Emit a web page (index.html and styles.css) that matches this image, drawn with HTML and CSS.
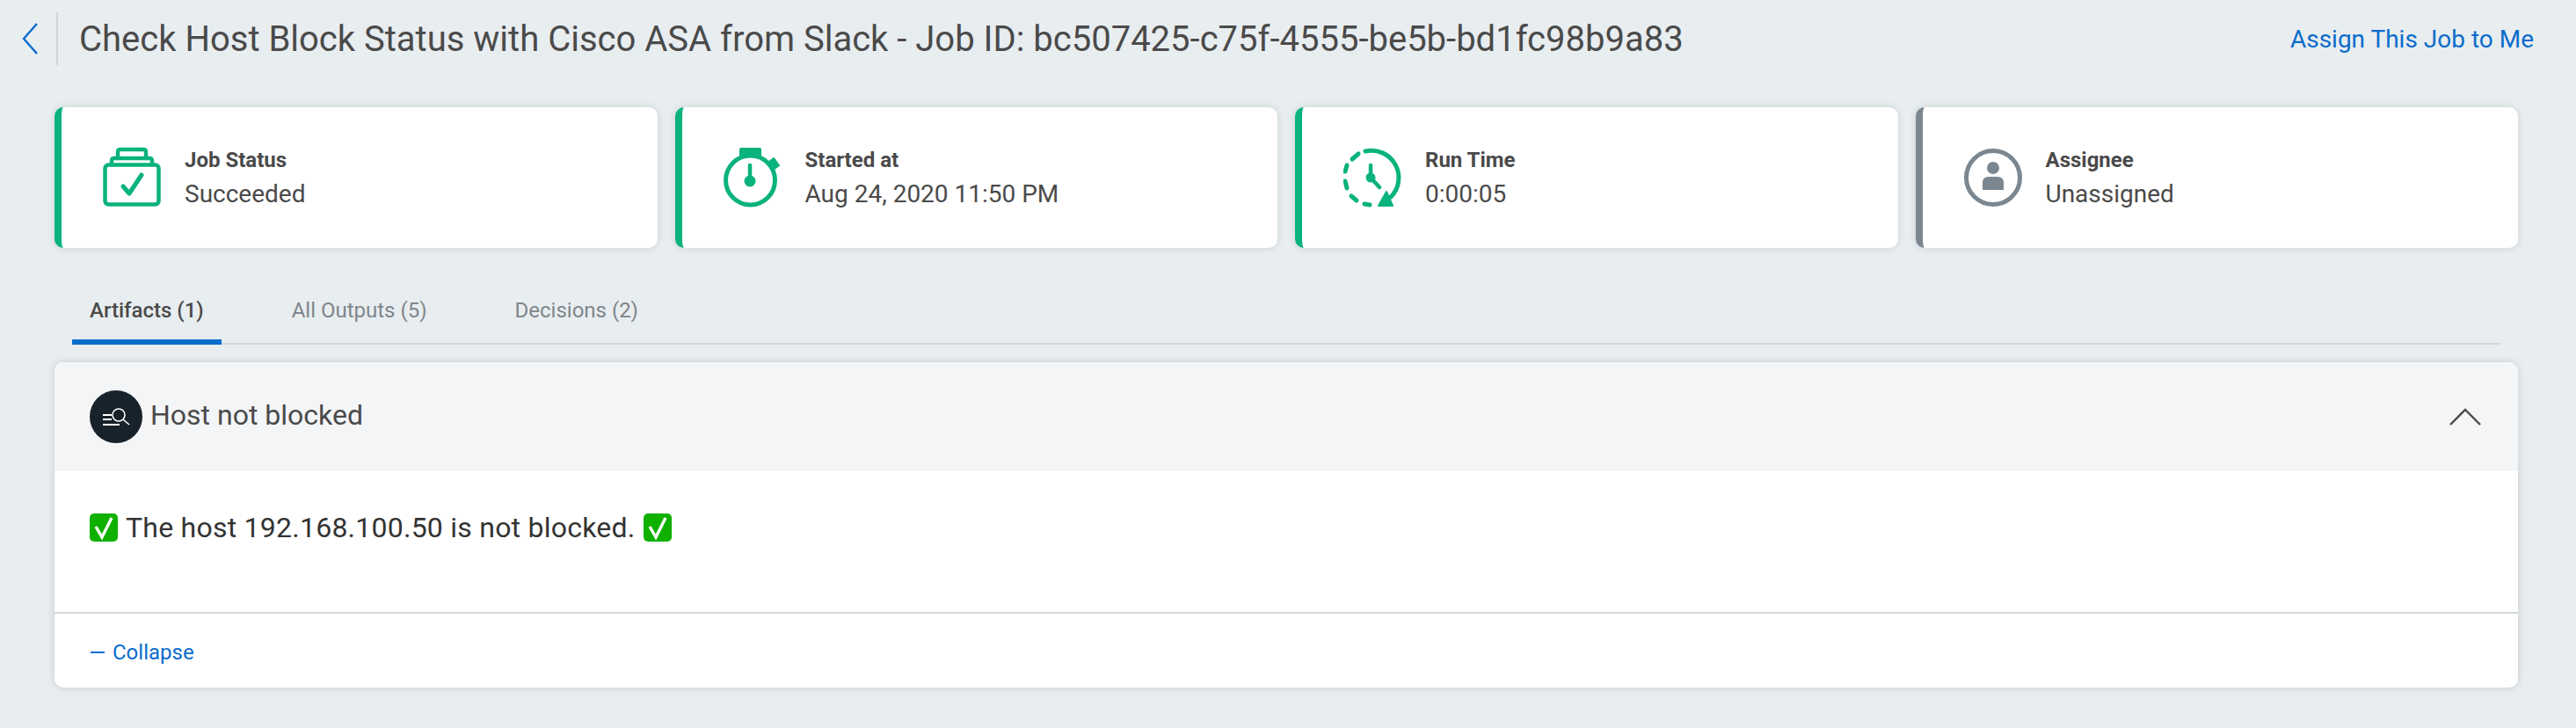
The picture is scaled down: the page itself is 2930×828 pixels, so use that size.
FILE: index.html
```html
<!DOCTYPE html>
<html lang="en">
<head>
    <meta charset="UTF-8">
    <title>Job Details</title>
    <link rel="stylesheet" href="styles.css">
</head>
<body>
    <header class="top-bar">
        <a class="back-link" href="#">
            <svg width="20" height="36" viewBox="0 0 20 36"><path d="M18 1 L3 18 L18 35" fill="none" stroke="#0a6ccb" stroke-width="2.4"/></svg>
        </a>
        <h1 class="job-title">Check Host Block Status with Cisco ASA from Slack - Job ID: bc507425-c75f-4555-be5b-bd1fc98b9a83</h1>
        <a class="assign-link" href="#">Assign This Job to Me</a>
    </header>

    <section class="summary">
        <div class="card">
            <svg class="card-icon" width="70" height="70" viewBox="0 0 70 70">
                <g fill="none" stroke="#0ab27d" stroke-width="4.5" stroke-linejoin="round" stroke-linecap="round">
                    <rect x="2.5" y="20.5" width="61" height="45" rx="4"/>
                    <path d="M10 20 V16 Q10 13 13 13 H53 Q56 13 56 16 V20"/>
                    <path d="M17 13 V6 Q17 3 20 3 H46 Q49 3 49 6 V13"/>
                </g>
                <path d="M23 45 L30 53 L44 32" fill="none" stroke="#0ab27d" stroke-width="5" stroke-linecap="round" stroke-linejoin="round"/>
            </svg>
            <div>
                <div class="card-label">Job Status</div>
                <div class="card-value">Succeeded</div>
            </div>
        </div>
        <div class="card">
            <svg class="card-icon" width="70" height="70" viewBox="0 0 70 70">
                <circle cx="30.5" cy="38" r="28" fill="none" stroke="#0ab27d" stroke-width="5"/>
                <rect x="18" y="1" width="25" height="11" rx="2" fill="#0ab27d"/>
                <rect x="51" y="14" width="11" height="12" rx="1" fill="#0ab27d" transform="rotate(-35 56 20)"/>
                <circle cx="30" cy="39" r="6.5" fill="#0ab27d"/>
                <path d="M30 21 V39" stroke="#0ab27d" stroke-width="4.5" stroke-linecap="round"/>
            </svg>
            <div>
                <div class="card-label">Started at</div>
                <div class="card-value">Aug 24, 2020 11:50 PM</div>
            </div>
        </div>
        <div class="card">
            <svg class="card-icon" width="70" height="70" viewBox="0 0 70 70">
                <g fill="none" stroke="#0ab27d" stroke-width="5" stroke-linecap="round">
                    <path d="M25 5 A31 31 0 0 1 54 57"/>
                    <path d="M10 14 L17 8"/>
                    <path d="M2 28 L4 21"/>
                    <path d="M2 39 L4 47"/>
                    <path d="M9 56 L15 61"/>
                    <path d="M24 65 L30 66"/>
                </g>
                <path d="M40 67 L49 51 L56 67 Z" fill="#0ab27d" stroke="#0ab27d" stroke-width="2" stroke-linejoin="round"/>
                <path d="M31 21 V35 L41 46" fill="none" stroke="#0ab27d" stroke-width="4.5" stroke-linecap="round"/>
                <circle cx="31" cy="35" r="5.5" fill="#0ab27d"/>
            </svg>
            <div>
                <div class="card-label">Run Time</div>
                <div class="card-value">0:00:05</div>
            </div>
        </div>
        <div class="card card-idle">
            <svg class="card-icon" width="70" height="70" viewBox="0 0 70 70">
                <circle cx="33" cy="35" r="30.5" fill="none" stroke="#7b8790" stroke-width="5"/>
                <circle cx="33" cy="24" r="7" fill="#7b8790"/>
                <path d="M21 49 V41 Q21 34 28 34 H38 Q45 34 45 41 V49 Z" fill="#7b8790"/>
            </svg>
            <div>
                <div class="card-label">Assignee</div>
                <div class="card-value">Unassigned</div>
            </div>
        </div>
    </section>

    <nav class="tabs">
        <a class="tab active" href="#">Artifacts (1)</a>
        <a class="tab" href="#">All Outputs (5)</a>
        <a class="tab" href="#">Decisions (2)</a>
    </nav>

    <section class="panel">
        <div class="panel-head">
            <span class="round-icon">
                <svg width="40" height="32" viewBox="0 0 40 32">
                    <circle cx="23" cy="14" r="7" fill="none" stroke="#fff" stroke-width="1.6"/>
                    <path d="M28 19 L35 25" stroke="#fff" stroke-width="1.6"/>
                    <path d="M5 14 H15 M5 19 H15 M5 25 H24" stroke="#fff" stroke-width="1.8"/>
                </svg>
            </span>
            <h2 class="panel-title">Host not blocked</h2>
            <svg class="panel-toggle" width="36" height="20" viewBox="0 0 36 20"><path d="M1 19 L18 2 L35 19" fill="none" stroke="#4a4a4a" stroke-width="2.4"/></svg>
        </div>
        <div class="panel-body">
            <svg class="check" width="32" height="32" viewBox="0 0 32 32">
                <rect width="32" height="32" rx="5" fill="#0fb000"/>
                <path d="M7 15 L14 27 L25 5" fill="none" stroke="#fff" stroke-width="3.4"/>
            </svg>
            <span>The host 192.168.100.50 is not blocked.</span>
            <svg class="check" width="32" height="32" viewBox="0 0 32 32">
                <rect width="32" height="32" rx="5" fill="#0fb000"/>
                <path d="M7 15 L14 27 L25 5" fill="none" stroke="#fff" stroke-width="3.4"/>
            </svg>
        </div>
        <div class="panel-foot">
            <a class="collapse-link" href="#"><span class="dash"></span>Collapse</a>
        </div>
    </section>
</body>
</html>
```

FILE: styles.css
```css
body {
    font-family: Roboto, Arial, sans-serif;
    background-color: #e8edf0;
    color: #4a4a4a;
    margin: 0;
    height: 828px;
    overflow: hidden;
}
a {
    text-decoration: none;
}
.top-bar {
    display: flex;
    align-items: center;
    height: 88px;
    padding: 0 48px 0 24px;
}
.back-link {
    display: flex;
    align-items: center;
    height: 60px;
    padding-right: 20px;
    margin-right: 24px;
    border-right: 2px solid #cfd4d8;
}
.job-title {
    flex: 1;
    margin: 0;
    font-size: 40px;
    font-weight: 400;
}
.assign-link {
    color: #0a6ccb;
    font-size: 28px;
}
.summary {
    display: grid;
    grid-template-columns: repeat(4, 1fr);
    gap: 20px;
    margin: 34px 66px 0 62px;
}
.card {
    display: flex;
    align-items: center;
    height: 160px;
    box-sizing: border-box;
    padding-left: 47px;
    background-color: #fff;
    border-left: 8px solid #0ab27d;
    border-radius: 10px;
    box-shadow: 0 0 10px rgba(0, 0, 0, 0.12);
}
.card-idle {
    border-left-color: #7b8790;
}
.card-icon {
    margin-right: 23px;
    flex-shrink: 0;
}
.card-label {
    font-size: 24px;
    font-weight: 700;
    margin-bottom: 8px;
}
.card-value {
    font-size: 28px;
}
.tabs {
    display: flex;
    gap: 60px;
    height: 88px;
    margin: 22px 86px 0 82px;
    border-bottom: 2px solid #d2d7db;
    box-sizing: border-box;
}
.tab {
    display: flex;
    align-items: center;
    height: 88px;
    padding: 16px 20px 0;
    box-sizing: border-box;
    font-size: 24px;
    color: #7f868b;
    border-bottom: 6px solid transparent;
}
.tab.active {
    color: #4a4a4a;
    font-weight: 500;
    border-bottom-color: #0a6ccb;
}
.panel {
    margin: 20px 66px 0 62px;
    background-color: #fff;
    border-radius: 10px;
    box-shadow: 0 0 10px rgba(0, 0, 0, 0.14);
    overflow: hidden;
}
.panel-head {
    display: flex;
    align-items: center;
    height: 124px;
    padding: 0 42px 0 40px;
    background-color: #f4f5f7;
}
.round-icon {
    display: flex;
    align-items: center;
    justify-content: center;
    width: 60px;
    height: 60px;
    border-radius: 50%;
    background-color: #18222b;
    margin-right: 9px;
}
.panel-title {
    flex: 1;
    margin: 0 0 4px;
    font-size: 32px;
    font-weight: 400;
}
.panel-body {
    display: flex;
    align-items: center;
    gap: 9px;
    height: 162px;
    padding: 0 40px 32px;
    box-sizing: border-box;
    font-size: 32px;
    letter-spacing: 0.24px;
    color: #333;
    border-bottom: 2px solid #d2d7db;
}
.panel-foot {
    height: 84px;
    display: flex;
    align-items: center;
    padding: 4px 40px 0;
    box-sizing: border-box;
}
.collapse-link {
    display: flex;
    align-items: center;
    color: #0a6ccb;
    font-size: 24px;
}
.dash {
    width: 16px;
    height: 1.5px;
    background-color: #0a6ccb;
    margin: 0 9px 0 1px;
}
```
